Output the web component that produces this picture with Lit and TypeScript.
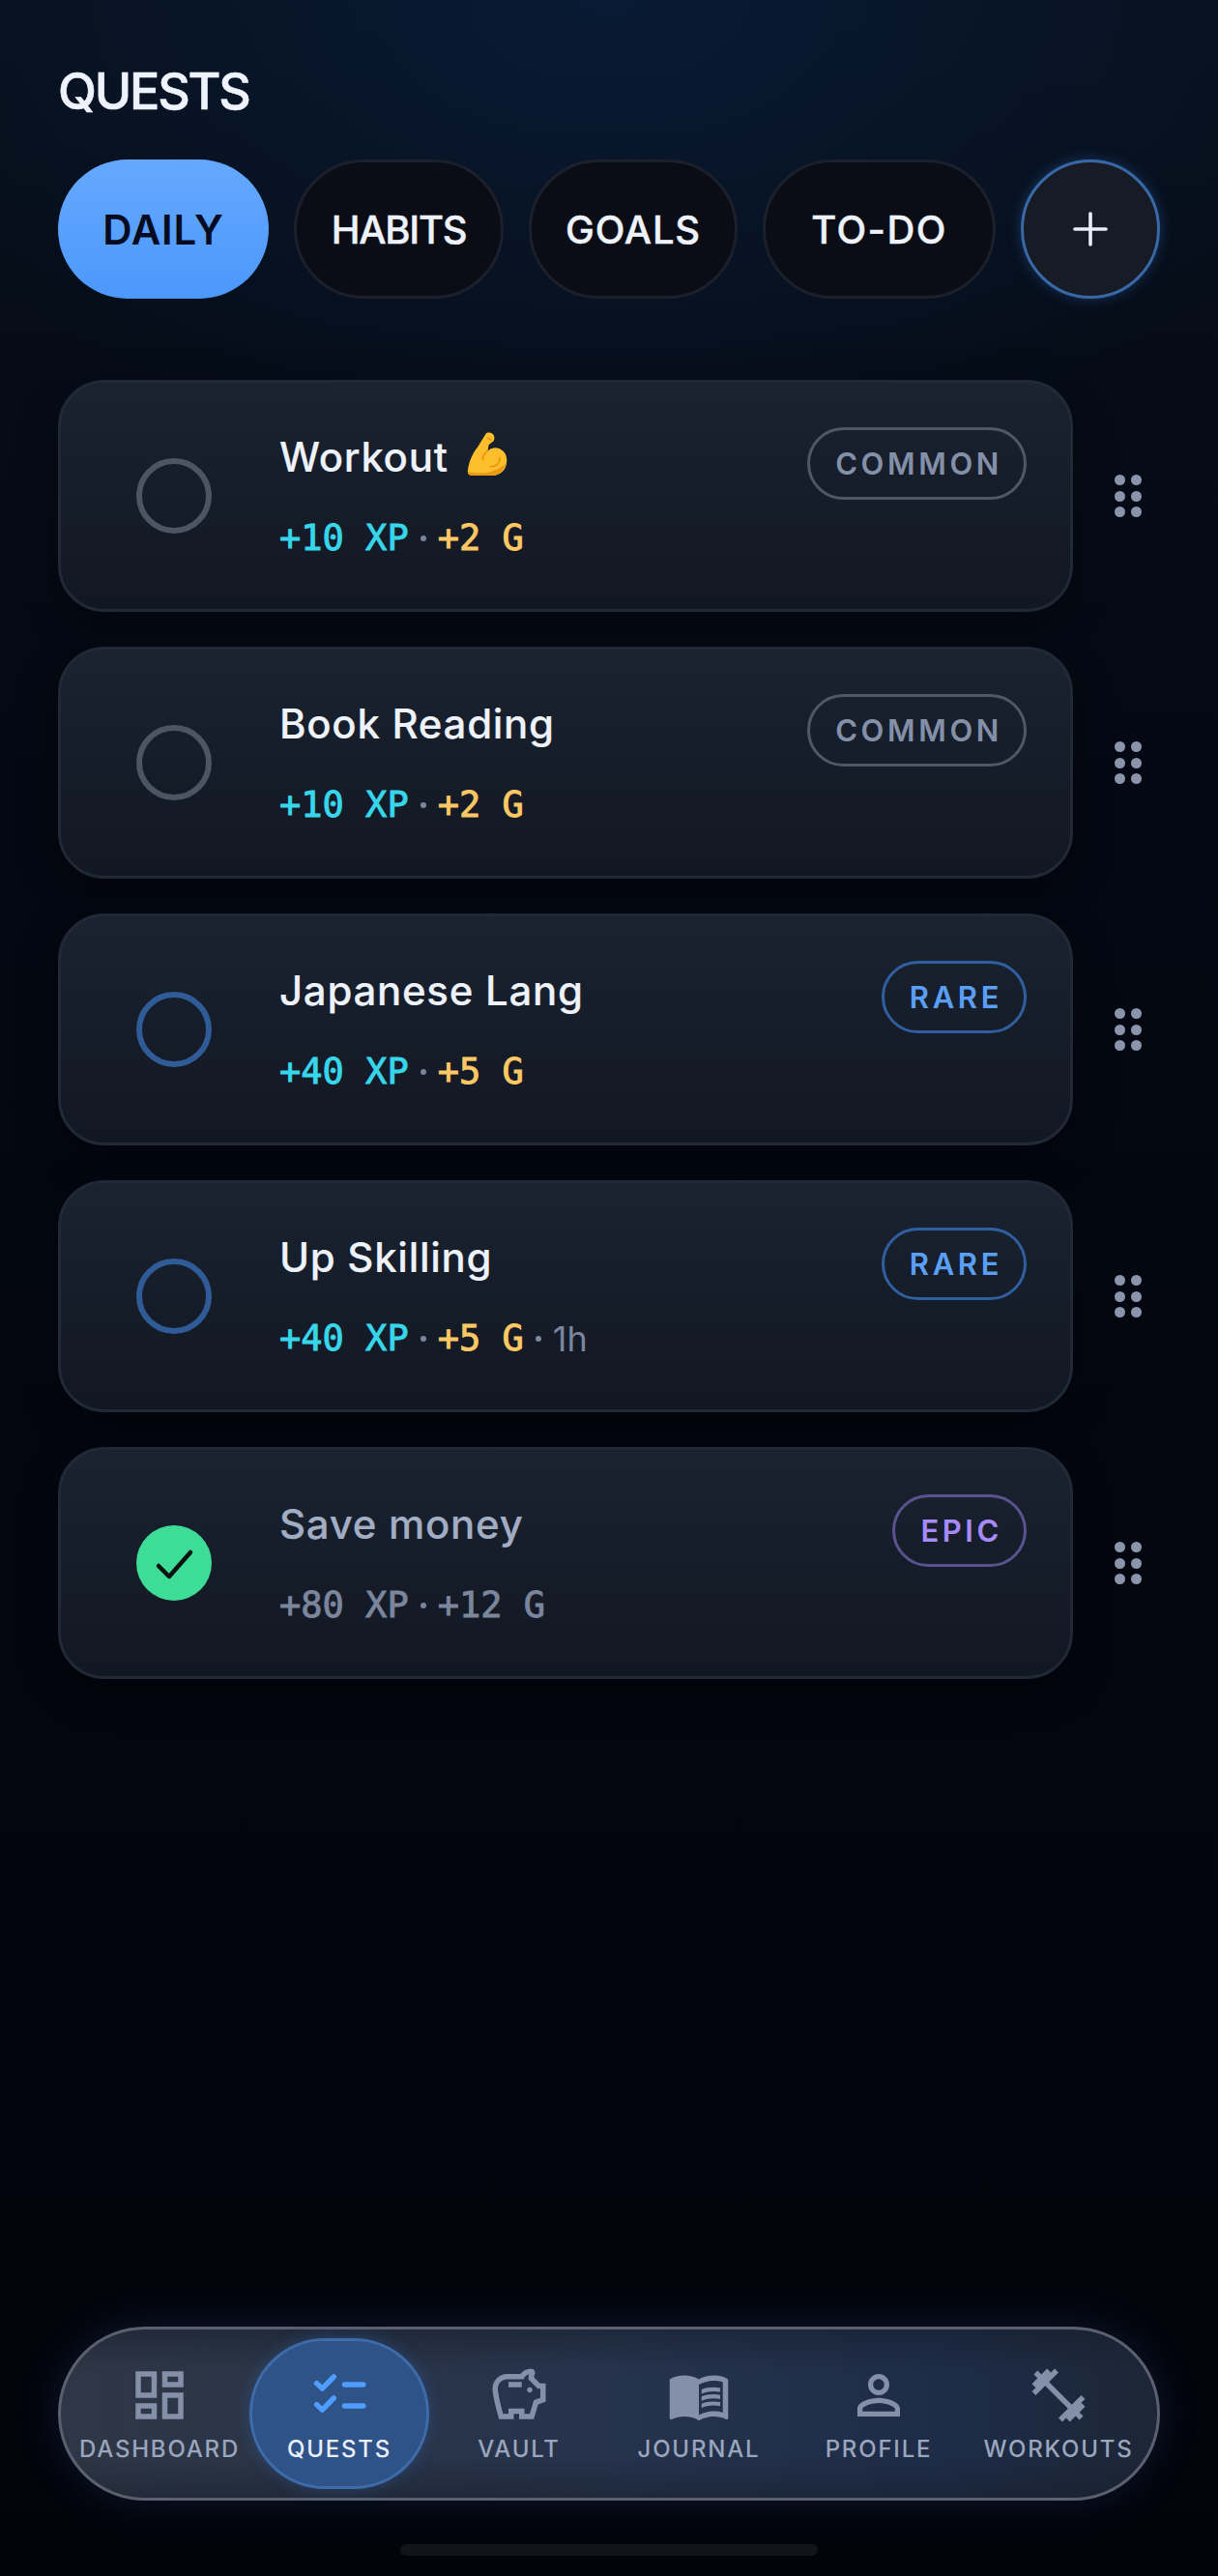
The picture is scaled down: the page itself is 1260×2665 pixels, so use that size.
import { LitElement, html, css } from "lit";
import { customElement } from "lit/decorators.js";
import { classMap } from "lit/directives/class-map.js";

const tabs = [
  { label: "DAILY", width: 218, spacing: 0.8, on: true },
  { label: "HABITS", width: 217, spacing: -1.3 },
  { label: "GOALS", width: 216, spacing: 0.8 },
  { label: "TO-DO", width: 241, spacing: 1.4 },
];

const quests = [
  { title: "Workout", emoji: true, xp: 10, gold: 2, tier: "common" },
  { title: "Book Reading", xp: 10, gold: 2, tier: "common" },
  { title: "Japanese Lang", xp: 40, gold: 5, tier: "rare" },
  { title: "Up Skilling", xp: 40, gold: 5, tier: "rare", time: "1h" },
  { title: "Save money", xp: 80, gold: 12, tier: "epic", done: true },
];

const icons: Record<string, unknown> = {
  dashboard: html`<svg viewBox="0 0 24 24" fill="currentColor"><path d="M19 5v2h-4V5h4M9 5v6H5V5h4m10 8v6h-4v-6h4M9 17v2H5v-2h4M21 3h-8v6h8V3zM11 3H3v10h8V3zm10 8h-8v10h8V11zm-10 4H3v6h8v-6z"/></svg>`,
  quests: html`<svg viewBox="0 0 24 24" fill="none" stroke="currentColor" stroke-width="2" stroke-linecap="round" stroke-linejoin="round"><path d="M14 8h7M14 16h7M3.5 7.5l2.1 2 4.3-4.4M3.5 15.5l2.1 2 4.3-4.4"/></svg>`,
  vault: html`<svg viewBox="0 0 24 24" fill="currentColor"><path d="M15 10c0-.55.45-1 1-1s1 .45 1 1-.45 1-1 1-1-.45-1-1zM8 9h5V7H8v2zm14-1.5v6.97l-2.82.94L17.5 21H12v-2h-2v2H4.5S2 12.54 2 9.5 4.46 4 7.5 4h5c.91-1.21 2.36-2 4-2 .83 0 1.5.67 1.5 1.5 0 .21-.04.4-.12.58-.14.32-.26.69-.32 1.09l2.27 2.33H22zm-2 2h-1L15.5 6c0-.65.09-1.29.26-1.91-.97.25-1.76.97-2.09 1.91H7.5C5.57 6 4 7.57 4 9.5c0 1.88 1.22 6.65 2.01 9.5H8v-2h6v2h2.01l1.55-5.15 2.44-.82V9.5z"/></svg>`,
  journal: html`<svg viewBox="0 0 24 24" fill="currentColor"><path d="M21 5c-1.11-.35-2.33-.5-3.5-.5-1.95 0-4.05.4-5.5 1.5-1.45-1.1-3.55-1.5-5.5-1.5S2.45 4.9 1 6v14.65c0 .25.25.5.5.5.1 0 .15-.05.25-.05C3.1 20.45 5.05 20 6.5 20c1.95 0 4.05.4 5.5 1.5 1.35-.85 3.8-1.5 5.5-1.5 1.65 0 3.35.3 4.75 1.05.1.05.15.05.25.05.25 0 .5-.25.5-.5V6c-.6-.45-1.25-.75-2-1zm0 13.5c-1.1-.35-2.3-.5-3.5-.5-1.7 0-4.15.65-5.5 1.5V8c1.35-.85 3.8-1.5 5.5-1.5 1.2 0 2.4.15 3.5.5v11.5z"/><path d="M17.5 10.5c.88 0 1.73.09 2.5.26V9.24c-.79-.15-1.64-.24-2.5-.24-1.7 0-3.24.29-4.5.83v1.66c1.13-.64 2.7-.99 4.5-.99zM13 12.49v1.66c1.13-.64 2.7-.99 4.5-.99.88 0 1.73.09 2.5.26V11.9c-.79-.15-1.64-.24-2.5-.24-1.7 0-3.24.3-4.5.83zM17.5 14.33c-1.7 0-3.24.29-4.5.83v1.66c1.13-.64 2.7-.99 4.5-.99.88 0 1.73.09 2.5.26v-1.52c-.79-.16-1.64-.24-2.5-.24z"/></svg>`,
  profile: html`<svg viewBox="0 0 24 24" fill="currentColor"><path d="M12 5.9c1.16 0 2.1.94 2.1 2.1s-.94 2.1-2.1 2.1S9.9 9.16 9.9 8s.94-2.1 2.1-2.1m0 9c2.97 0 6.1 1.46 6.1 2.1v1.1H5.9V17c0-.64 3.13-2.1 6.1-2.1M12 4C9.79 4 8 5.79 8 8s1.79 4 4 4 4-1.79 4-4-1.79-4-4-4zm0 9c-2.67 0-8 1.34-8 4v3h16v-3c0-2.66-5.33-4-8-4z"/></svg>`,
  workouts: html`<svg viewBox="0 0 24 24" fill="currentColor"><path d="M20.57 14.86L22 13.43 20.57 12 17 15.57 8.43 7 12 3.43 10.57 2 9.14 3.43 7.71 2 5.57 4.14 4.14 2.71 2.71 4.14l1.43 1.43L2 7.71l1.43 1.43L2 10.57 3.43 12 7 8.43 15.57 17 12 20.57 13.43 22l1.43-1.43L16.29 22l2.14-2.14 1.43 1.43 1.43-1.43-1.43-1.43L22 16.29z"/></svg>`,
};

const navItems = ["dashboard", "quests", "vault", "journal", "profile", "workouts"];

@customElement("app-root")
export class AppRoot extends LitElement {
  static styles = css`
    :host {
      display: flex;
      flex-direction: column;
      box-sizing: border-box;
      width: 1260px;
      height: 2665px;
      padding: 0 60px 21px;
      overflow: hidden;
      font-family: Inter, "Liberation Sans", sans-serif;
      color: #eef2fb;
      background:
        radial-gradient(ellipse 800px 480px at 50% 0, #091a34 0%, rgba(9, 26, 52, 0) 100%),
        linear-gradient(180deg, #07101c 0%, #040812 30%, #02040b 100%);
    }
    h1 {
      margin: 0;
      padding-top: 64px;
      font-size: 52px;
      line-height: 62px;
      font-weight: 500;
      letter-spacing: -2.2px;
      -webkit-text-stroke: 0.6px currentColor;
    }
    .tabs {
      display: flex;
      justify-content: space-between;
      margin-top: 39px;
    }
    .tab {
      box-sizing: border-box;
      height: 144px;
      display: flex;
      align-items: center;
      justify-content: center;
      font-size: 40px;
      font-weight: 500;
      -webkit-text-stroke: 0.4px currentColor;
      border-radius: 72px;
      border: 3px solid #1c202b;
      background: #0a0d16;
    }
    .tab.on {
      border: 0;
      font-size: 42px;
      font-weight: 600;
      -webkit-text-stroke: 0;
      color: #050b20;
      background: linear-gradient(180deg, #66a8ff, #4b98fb);
    }
    .add {
      box-sizing: border-box;
      width: 144px;
      height: 144px;
      display: flex;
      align-items: center;
      justify-content: center;
      border-radius: 50%;
      border: 3px solid #3868a5;
      background: #171b25;
      box-shadow: 0 0 14px rgba(60, 120, 210, 0.35);
    }
    .add svg {
      width: 38px;
      height: 38px;
    }
    .list {
      display: flex;
      flex-direction: column;
      gap: 36px;
      margin-top: 84px;
    }
    .row {
      display: flex;
    }
    .card {
      box-sizing: border-box;
      flex: 1;
      height: 240px;
      display: flex;
      align-items: center;
      padding: 0 45px 0 78px;
      border: 3px solid #222936;
      border-radius: 48px;
      background: linear-gradient(180deg, #1b2230, #111823);
      box-shadow: 0 12px 40px rgba(0, 0, 0, 0.35);
    }
    .check {
      box-sizing: border-box;
      flex: none;
      width: 78px;
      height: 78px;
      border-radius: 50%;
      border: 6px solid #4d5563;
    }
    .rare .check {
      border-color: #2f5c96;
    }
    .done .check {
      border: 0;
      background: #3ddc97;
    }
    .check svg {
      display: block;
      width: 78px;
      height: 78px;
    }
    .body {
      flex: 1;
      align-self: flex-start;
      margin-left: 70px;
      padding-top: 52px;
    }
    .name {
      display: flex;
      align-items: center;
      gap: 19px;
      font-size: 42px;
      line-height: 50px;
      font-weight: 500;
      letter-spacing: 0.7px;
      -webkit-text-stroke: 0.15px currentColor;
    }
    .done .name {
      color: #a2adc4;
    }
    .name svg {
      width: 42px;
      height: 46px;
      margin-top: -6px;
    }
    .meta {
      display: flex;
      align-items: center;
      margin-top: 37px;
      font-family: "DejaVu Sans Mono", "Liberation Mono", monospace;
      font-size: 37px;
      line-height: 44px;
      font-weight: 400;
      -webkit-text-stroke: 0.9px currentColor;
    }
    .xp {
      color: #38d6ea;
    }
    .gold {
      color: #fcc865;
    }
    .done .xp,
    .done .gold {
      color: #7b869c;
    }
    .sep {
      flex: none;
      width: 6px;
      height: 6px;
      margin: 0 12px;
      border-radius: 50%;
      background: #7b869c;
    }
    .time {
      font-family: Inter, "Liberation Sans", sans-serif;
      font-size: 36px;
      font-weight: 400;
      color: #7b869c;
      -webkit-text-stroke: 0;
    }
    .pill {
      flex: none;
      align-self: flex-start;
      box-sizing: border-box;
      height: 75px;
      margin-top: 46px;
      padding: 0 22px 0 26px;
      display: flex;
      align-items: center;
      font-size: 31px;
      font-weight: 600;
      letter-spacing: 3.6px;
      border-radius: 38px;
      border: 3px solid #4f5866;
      color: #8490a8;
    }
    .rare .pill {
      border-color: #2f5f9f;
      color: #5a9ff5;
    }
    .epic .pill {
      border-color: #5b5290;
      color: #a78bfa;
    }
    .handle {
      flex: none;
      box-sizing: border-box;
      width: 90px;
      padding-left: 43px;
      display: grid;
      grid-template-columns: 11px 11px;
      grid-auto-rows: 11px;
      gap: 5.6px;
      align-content: center;
    }
    .handle i {
      border-radius: 50%;
      background: #8a94ab;
    }
    nav {
      box-sizing: border-box;
      margin-top: auto;
      height: 180px;
      padding: 9px;
      display: grid;
      grid-template-columns: repeat(6, 186px);
      border: 3px solid #5a6070;
      border-radius: 90px;
      background:
        linear-gradient(180deg, rgba(20, 28, 40, 0.45), rgba(20, 28, 40, 0) 25%, rgba(20, 28, 40, 0) 75%, rgba(20, 28, 40, 0.45)),
        linear-gradient(90deg, #2f3746 0%, #26334c 50%, #1e2c48 80%, #1c2636 100%);
      box-shadow: 0 0 40px rgba(70, 110, 180, 0.18);
    }
    .item {
      box-sizing: border-box;
      display: flex;
      flex-direction: column;
      align-items: center;
      justify-content: center;
      gap: 8px;
      padding-bottom: 2px;
      border-radius: 78px;
      border: 3px solid transparent;
      color: #8490a8;
    }
    .item.on {
      border-color: #3d6cab;
      background: #2f5287;
      box-shadow: 0 0 16px rgba(60, 120, 210, 0.3);
      color: #4f9dff;
    }
    .item svg {
      display: block;
      width: 66px;
      height: 66px;
    }
    .item span {
      font-size: 24px;
      line-height: 29px;
      font-weight: 500;
      letter-spacing: 1.8px;
      color: #9aa6bd;
    }
    .item.on span {
      color: #e8f0ff;
    }
    .home {
      width: 432px;
      height: 12px;
      margin: 45px auto 0;
      border-radius: 6px;
      background: #121419;
    }
  `;

  private renderQuest(q: (typeof quests)[number]) {
    return html`
      <div class="row">
        <div class=${classMap({ card: true, [q.tier]: true, done: !!q.done })}>
          <div class="check">
            ${q.done
              ? html`<svg viewBox="0 0 78 78" fill="none" stroke="#0a1210" stroke-width="4.5" stroke-linecap="round" stroke-linejoin="round"><path d="M23 42l11 11 22-25"/></svg>`
              : ""}
          </div>
          <div class="body">
            <div class="name">
              ${q.title}
              ${q.emoji
                ? html`<svg viewBox="0 0 41 45"><path fill="#fcbf2b" d="M11 15L19 2c1-2 6-2 8 1 1 2 1 4 0 6l-5 4-1 6c5-4 10-4 14-1 5 3 6 9 5 14-1 7-7 12-14 12H6c-4 0-6-2-5-6 1-8 5-17 10-23z"/><path fill="#e99a16" d="M40 30c-1 7-7 14-14 14H6c-3 0-5-1-5-4 8 2 20 2 26-1 6-2 11-5 13-9z"/><path fill="none" stroke="#e8930c" stroke-width="1.6" stroke-linecap="round" d="M21 19c-3 2-5 5-5 9M33 26c1 5-3 9-9 9M21 6l3 2"/></svg>`
                : ""}
            </div>
            <div class="meta">
              <span class="xp">+${q.xp} XP</span>
              <span class="sep"></span>
              <span class="gold">+${q.gold} G</span>
              ${q.time ? html`<span class="sep"></span><span class="time">${q.time}</span>` : ""}
            </div>
          </div>
          <div class="pill">${q.tier.toUpperCase()}</div>
        </div>
        <div class="handle">${[0, 1, 2, 3, 4, 5].map(() => html`<i></i>`)}</div>
      </div>
    `;
  }

  render() {
    return html`
      <h1>QUESTS</h1>
      <div class="tabs">
        ${tabs.map(
          (t) => html`
            <div
              class=${classMap({ tab: true, on: !!t.on })}
              style="width:${t.width}px;letter-spacing:${t.spacing}px"
            >
              ${t.label}
            </div>
          `
        )}
        <div class="add">
          <svg viewBox="0 0 38 38" stroke="#e8edf8" stroke-width="3.6" stroke-linecap="round"><path d="M19 3v32M3 19h32"/></svg>
        </div>
      </div>
      <div class="list">${quests.map((q) => this.renderQuest(q))}</div>
      <nav>
        ${navItems.map(
          (n) => html`
            <div class=${classMap({ item: true, on: n === "quests" })}>
              ${icons[n]}
              <span>${n.toUpperCase()}</span>
            </div>
          `
        )}
      </nav>
      <div class="home"></div>
    `;
  }
}
